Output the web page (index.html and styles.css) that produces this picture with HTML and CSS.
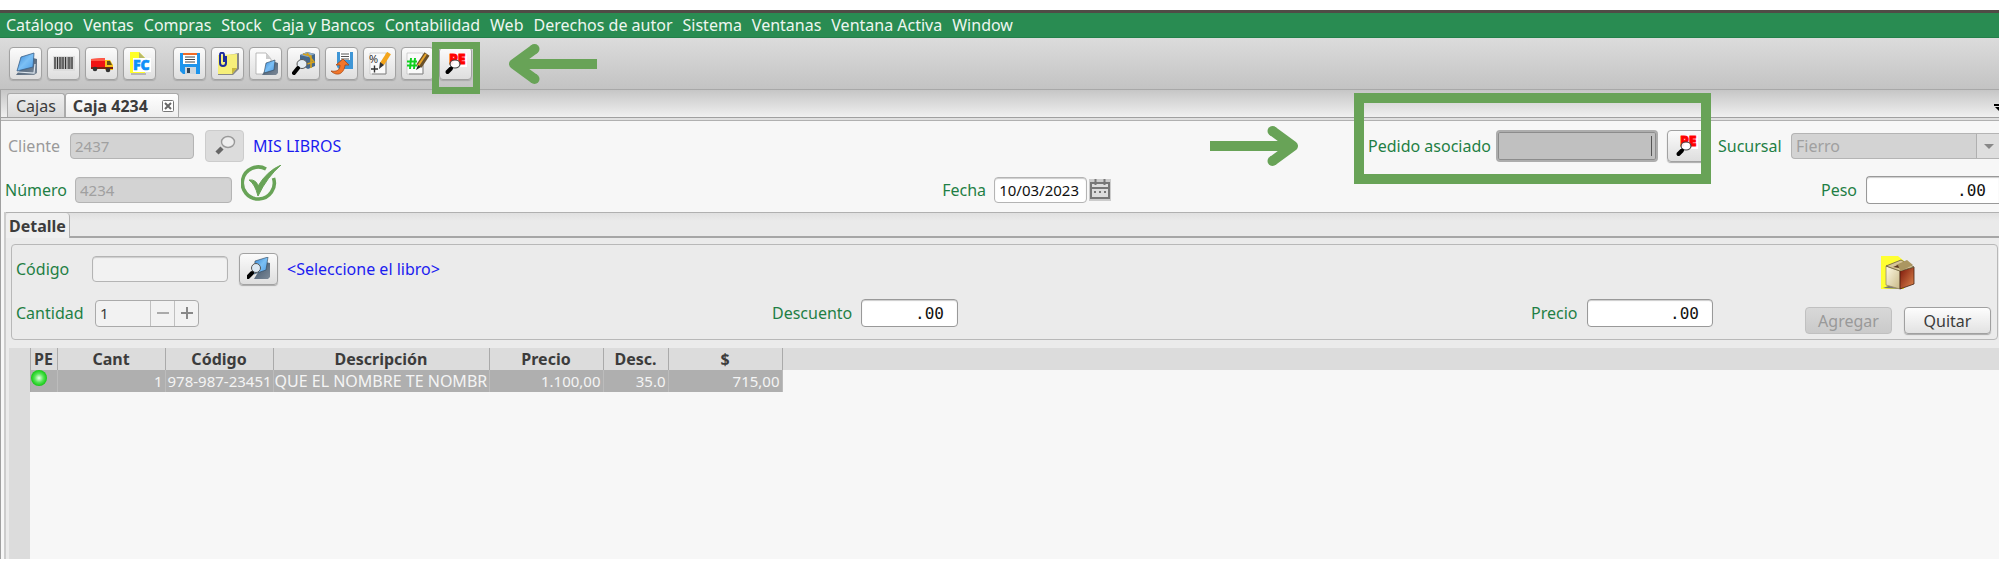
FILE: index.html
```html
<!DOCTYPE html>
<html lang="es">
<head>
<meta charset="utf-8">
<title>Caja 4234</title>
<link rel="stylesheet" href="styles.css">
</head>
<body>
<svg class="defs" aria-hidden="true">
  <defs>
    <linearGradient id="blue" x1="0" y1="0" x2="1" y2="1"><stop offset="0" stop-color="#2f7fd0"/><stop offset=".5" stop-color="#7cc0f5"/><stop offset="1" stop-color="#4b9be6"/></linearGradient>
    <linearGradient id="slate" x1="0" y1="0" x2="1" y2="1"><stop offset="0" stop-color="#3a5068"/><stop offset="1" stop-color="#7d8a98"/></linearGradient>
    <linearGradient id="cream" x1="0" y1="0" x2="1" y2="1"><stop offset="0" stop-color="#fffbe6"/><stop offset="1" stop-color="#c9b987"/></linearGradient>
    <linearGradient id="rust" x1="0" y1="0" x2="1" y2="1"><stop offset="0" stop-color="#7a1408"/><stop offset="1" stop-color="#e08a50"/></linearGradient>
    <radialGradient id="led"><stop offset="0" stop-color="#eaffea"/><stop offset=".55" stop-color="#55e455"/><stop offset="1" stop-color="#12c812"/></radialGradient>
    <symbol id="pe" viewBox="0 0 24 24">
      <path fill="#fff" d="M5 1h18v14H5z"/>
      <text x="5" y="12" font-family="Open Sans, sans-serif" font-weight="800" font-size="14" fill="#f00" stroke="#f00" stroke-width=".8">PE</text>
      <ellipse cx="11" cy="12" rx="5" ry="4" fill="#fff" fill-opacity=".9" stroke="#444" stroke-width="1.2"/>
      <path d="M7 16.500 3.500 20" stroke="#000" stroke-width="4" stroke-linecap="round"/>
    </symbol>
    <symbol id="arrow" viewBox="0 0 88 40">
      <path d="M0 20H80M62.500 5 83 20 62.500 35" fill="none" stroke="#68a357" stroke-width="10" stroke-linecap="butt" stroke-linejoin="round"/>
      <circle cx="62.500" cy="5" r="5" fill="#68a357"/><circle cx="62.500" cy="35" r="5" fill="#68a357"/>
    </symbol>
  </defs>
</svg>
<div class="app">
  <nav class="menubar">
    <button>Catálogo</button><button>Ventas</button><button>Compras</button><button>Stock</button><button>Caja y Bancos</button><button>Contabilidad</button><button>Web</button><button>Derechos de autor</button><button>Sistema</button><button>Ventanas</button><button>Ventana Activa</button><button>Window</button>
  </nav>

  <div class="toolbar">
    <button class="tool" aria-label="Libros"><svg viewBox="0 0 24 24"><path d="M19 6l4 1v14l-3 2H2l3-4z" fill="url(#slate)"/><path d="M4 20l16 1 1-9" fill="none" stroke="#dde6ee" stroke-width="1.200"/><path d="M7 5 20 1l-1 14-16 4z" fill="url(#blue)" stroke="#3a5f88" stroke-width=".8"/></svg></button>
    <button class="tool" aria-label="Código de barras"><svg viewBox="0 0 24 24"><path fill="#ddd" d="M1 4h22v15H1z"/><path d="M3 5v12M5.500 5v12M8 5v12M11 5v12M13.500 5v12M17 5v12M20 5v12" stroke="#333" stroke-width="1.400"/><path d="M9.500 5v12M15.300 5v12M18.500 5v12" stroke="#777" stroke-width=".8"/></svg></button>
    <button class="tool" aria-label="Envíos"><svg viewBox="0 0 24 24"><path d="M1 7l14-1v10H1z" fill="#f01414"/><path d="M1 7l14-1v3H1z" fill="#ff5a48"/><path d="M15 8h5l3 5v5h-8z" fill="#f6c21c"/><path d="M17 9h3l2 4h-5z" fill="#60501c"/><path d="M1 15h22v2H1z" fill="#7a2210"/><circle cx="5" cy="17" r="2.300" fill="#333"/><circle cx="18" cy="18" r="2.300" fill="#333"/></svg></button>
    <button class="tool" aria-label="Factura"><svg viewBox="0 0 24 24"><path d="M2 0h9l6 6v15H2z" fill="#ffff28"/><path d="M11 0v6h6z" fill="#b9b96a"/><path d="M5 6h18v14H5z" fill="#fff"/><path d="M3 22h15" stroke="#888"/><text x="5" y="18" font-family="Open Sans, sans-serif" font-weight="800" font-size="14" fill="#1090f8" stroke="#1090f8" stroke-width=".6">FC</text></svg></button>
    <span class="toolbar-split"></span>
    <button class="tool" aria-label="Guardar"><svg viewBox="0 0 24 24"><path d="M2 1h20v21H5l-3-3z" fill="#1c94ec"/><path d="M5 1h14v11H5z" fill="#fff"/><path d="M5 1h14v2H5z" fill="#f26a24"/><path d="M7 5h10M7 7.500h10M7 10h10" stroke="#444"/><path d="M7 15h11v7H7z" fill="#ccd6de"/><path d="M9 16h3v5H9z" fill="#345"/></svg></button>
    <button class="tool" aria-label="Nota adjunta"><svg viewBox="0 0 24 24"><path d="M3 5 23 1v16l-6 6H2z" fill="#888"/><path d="M2 3 21 2v14l-5 6H2z" fill="#f6ef7a"/><path d="M16 22v-6h5z" fill="#c8b83c"/><path d="M10 4v7c0 4-6 4-6 0V3c0-3 4-3 4 0v7" fill="none" stroke="#1c2c9c" stroke-width="2"/></svg></button>
    <button class="tool" aria-label="Nuevo libro"><svg viewBox="0 0 24 24"><path d="M2 1h10l5 6v15H2z" fill="#fff" stroke="#aaa" stroke-width=".8"/><path d="M12 1v6h5z" fill="#ccc"/><path d="M21 10l3 1v10l-2 2H8l2-3z" fill="url(#slate)"/><path d="M12 11l9-3-1 10-10 3z" fill="url(#blue)" stroke="#345" stroke-width=".6"/></svg></button>
    <button class="tool" aria-label="Buscar caja"><svg viewBox="0 0 24 24"><path d="M8 3l7-3 8 2v12l-7 3-8-4z" fill="#45688c"/><path d="M8 3l7-3 8 2-7 3z" fill="#8daac4"/><path d="M11 2l8 2v12M15 1l7 9-7 2" fill="none" stroke="#d5a21c" stroke-width="1.600"/><ellipse cx="10" cy="12" rx="5" ry="4.500" fill="#e6eef4" stroke="#555"/><path d="M6 16l-4 5" stroke="#000" stroke-width="4" stroke-linecap="round"/></svg></button>
    <button class="tool" aria-label="Recuperar"><svg viewBox="0 0 24 24"><path d="M7 0h16v17H9l-2-2z" fill="#3f96d6"/><path d="M10 0h10v8H10z" fill="#fff"/><path d="M11 2h8M11 4.500h8M11 7h8" stroke="#555"/><path d="M1 19c6 1 9-1 9-6H6l7-6 6 6h-4c-1 9-8 12-14 6z" fill="#f2762a" stroke="#a84812" stroke-width=".8"/></svg></button>
    <button class="tool" aria-label="Calcular"><svg viewBox="0 0 24 24"><path d="M2 1h16v21H2z" fill="#fafafa" stroke="#bbb" stroke-width=".6"/><path d="M4 22h14V8" fill="none" stroke="#888"/><text x="1" y="11" font-family="Open Sans, sans-serif" font-size="11" fill="#222">%</text><path d="M3 17h7M6.500 13.500v7" stroke="#333" stroke-width="1.400"/><path d="M21 1 14 12" stroke="#f3a51c" stroke-width="4.500"/><path d="m12 10 4 3-5 4z" fill="#333"/></svg></button>
    <button class="tool" aria-label="Numerar"><svg viewBox="0 0 24 24"><path d="M1 1h16v21H1z" fill="#fafafa" stroke="#bbb" stroke-width=".6"/><path d="M3 22h14V8" fill="none" stroke="#888"/><path d="M5 6 4 17M9 6 8 17M1 9.500h10M1 13.500h10" stroke="#10d020" stroke-width="2"/><path d="M21 2 13 14" stroke="#6a5028" stroke-width="6"/><path d="M20 2 12 14" stroke="#e8a428" stroke-width="2"/><path d="m10 18 2-5 3 2z" fill="#222"/></svg></button>
    <span class="marked"><button class="tool" aria-label="Pedido"><svg><use href="#pe"/></svg></button></span>
    <svg class="arrow arrow-left"><use href="#arrow"/></svg>
  </div>

  <main class="document">
  <div class="tabs">
    <button class="tab">Cajas</button>
    <button class="tab tab-on">Caja 4234 <svg class="close" viewBox="0 0 12 12"><rect x=".5" y=".5" width="11" height="11" rx="1" fill="#fff" stroke="#777"/><path d="m3 3 6 6M9 3 3 9" stroke="#666" stroke-width="2"/></svg></button>
    <svg class="more" viewBox="0 0 12 8"><path d="M0 0h12v2H0zM1 3h10L6 8z"/></svg>
  </div>

  <form class="header-form">
    <div class="row row-top">
      <label class="dim" for="cliente">Cliente</label>
      <input id="cliente" class="field w-client" value="2437" disabled>
      <button type="button" class="pick pick-off" aria-label="Buscar cliente" disabled><svg viewBox="0 0 24 24"><ellipse cx="15" cy="8" rx="6.500" ry="5.500" fill="#eee" stroke="#999" stroke-width="1.400"/><path d="m9 14-5 5" stroke="#666" stroke-width="4.500"/></svg></button>
      <output class="info">MIS LIBROS</output>
      <svg class="arrow arrow-right"><use href="#arrow"/></svg>
      <div class="order">
        <label for="pedido">Pedido asociado</label>
        <input id="pedido" class="field w-order">
        <button type="button" class="pick" aria-label="Buscar pedido"><svg><use href="#pe"/></svg></button>
      </div>
      <label for="sucursal">Sucursal</label>
      <div class="select-wrap">
        <select id="sucursal" disabled><option>Fierro</option></select>
      </div>
    </div>
    <div class="row row-bottom">
      <div class="cell">
        <label for="numero">Número</label>
        <input id="numero" class="field w-number" value="4234" disabled>
        <svg class="check" viewBox="0 0 40 38"><path d="M25 4A16 16 0 1 0 32.500 13" fill="none" stroke="#68a357" stroke-width="3.600"/><path d="M8 15q7-1 9 6Q26 6 40 0 26 12 17 31 14 19 8 15z" fill="#68a357" stroke="#68a357"/></svg>
      </div>
      <div class="cell">
        <label for="fecha">Fecha</label>
        <input id="fecha" class="field w-date" value="10/03/2023">
        <button type="button" class="calendar" aria-label="Calendario"><svg viewBox="0 0 22 22"><path d="M0 0h22v22H0z" fill="#ccc"/><path d="M2 4h18v15H2zM2 9h18" fill="#ddd" stroke="#777" stroke-width="2"/><path d="M6.500 0v6M15.500 0v6" stroke="#777" stroke-width="2"/><path d="M5 13h2m3 0h2m3 0h2" stroke="#777" stroke-width="2"/></svg></button>
      </div>
      <div class="cell">
        <label for="peso">Peso</label>
        <input id="peso" class="field num w-weight" value=".00">
      </div>
    </div>
  </form>

  <section class="detail">
    <div class="detail-tabs"><button class="detail-tab">Detalle</button></div>
    <form class="group">
      <div class="item">
        <div class="item-row">
          <label class="code-label" for="codigo">Código</label>
          <input id="codigo" class="field w-code">
          <button type="button" class="pick" aria-label="Buscar libro"><svg viewBox="0 0 24 24"><path d="M18 5l5 1v14l-2 2H7l3-5z" fill="url(#slate)"/><path d="M8 4 21 0l-2 13-12 4z" fill="url(#blue)" stroke="#345" stroke-width=".6"/><circle cx="9" cy="11" r="4.500" fill="#dce8f2" stroke="#555"/><path d="m5 16-4 4" stroke="#000" stroke-width="4" stroke-linecap="round"/></svg></button>
          <output class="info">&lt;Seleccione el libro&gt;</output>
        </div>
        <div class="item-row item-numbers">
          <div class="cell">
            <label for="cantidad">Cantidad</label>
            <div class="spin"><input id="cantidad" value="1"><button type="button" aria-label="Menos"><svg viewBox="0 0 12 12"><path d="M0 6h12" stroke="#aaa" stroke-width="2"/></svg></button><button type="button" aria-label="Más"><svg viewBox="0 0 12 12"><path d="M0 6h12M6 0v12" stroke="#888" stroke-width="2"/></svg></button></div>
          </div>
          <div class="cell">
            <label for="descuento">Descuento</label>
            <input id="descuento" class="field num w-discount" value=".00">
          </div>
          <div class="cell">
            <label for="precio">Precio</label>
            <input id="precio" class="field num w-price" value=".00">
          </div>
        </div>
      </div>
      <div class="actions">
        <svg class="box" viewBox="0 0 34 34"><path d="M0 0h17l6 5v28H0z" fill="#ffff32"/><path d="m2 32 8-3h10v4z" fill="#777"/><path d="m5 10 14 5v18L5 29z" fill="url(#cream)" stroke="#998c66" stroke-width=".8"/><path d="m19 15 14-4v17l-14 5z" fill="url(#rust)" stroke="#442010" stroke-width=".8"/><path d="m5 10 15-6 13 7-14 4z" fill="#d8c698" stroke="#6a5c3c" stroke-width=".8"/><path d="m15 9 11-5 6 5-12 6z" fill="#ab9661"/><path d="m12 11 5-2 1 3z" fill="#5a3820"/></svg>
        <div class="buttons">
          <button type="button" class="btn" disabled>Agregar</button>
          <button type="button" class="btn">Quitar</button>
        </div>
      </div>
    </form>
    <div class="grid">
      <table>
        <colgroup><col class="c-row"><col class="c-pe"><col class="c-wide"><col class="c-wide"><col class="c-desc"><col class="c-mid"><col class="c-pct"><col class="c-mid"></colgroup>
        <thead><tr><th></th><th>PE</th><th>Cant</th><th>Código</th><th>Descripción</th><th>Precio</th><th>Desc.</th><th>$</th></tr></thead>
        <tbody><tr><th></th><td class="led"><svg viewBox="0 0 16 16"><circle cx="8" cy="8" r="8" fill="url(#led)"/></svg></td><td class="r">1</td><td>978-987-23451</td><td class="title">QUE EL NOMBRE TE NOMBR</td><td class="r">1.100,00</td><td class="r">35.0</td><td class="r">715,00</td></tr></tbody>
      </table>
    </div>
  </section>
  </main>
</div>
</body>
</html>
```
FILE: styles.css
```css
* { box-sizing: border-box; }

body {
  margin: 0;
  background: #fff;
  color: #3c3c3c;
  font: 16px/20px "Noto Sans", "Open Sans", sans-serif;
  overflow-x: hidden;
}

button, input, select { font: inherit; color: inherit; margin: 0; }
button { padding: 0; border: 0; background: none; }
svg { display: block; flex: none; }
.defs { position: absolute; width: 0; height: 0; }

.app {
  display: flex;
  flex-direction: column;
  min-height: 100vh;
  padding: 10px 0 13px;
}

/* Menu bar */
.menubar {
  display: flex;
  gap: 10px;
  height: 28px;
  padding: 0 6px;
  border-top: 3px solid #504c46;
  border-bottom: 1px solid #23804a;
  background: #298c52;
  color: #eef6f0;
}
.menubar button { white-space: nowrap; }

/* Toolbar */
.toolbar {
  display: flex;
  align-items: center;
  gap: 5px;
  height: 52px;
  padding: 0 9px;
  border-bottom: 1px solid #a8a8a8;
  background: linear-gradient(#dcdcdc, #c3c3c3);
}
.tool, .pick {
  display: flex;
  align-items: center;
  justify-content: center;
  border: 1px solid #a2a2a2;
  border-radius: 4px;
  background: linear-gradient(#fbfbfb, #dedede);
  box-shadow: 0 1px 1px #aaa;
}
.tool { width: 33px; height: 33px; flex: none; }
.tool svg, .pick svg { width: 24px; height: 24px; }
.toolbar-split { width: 7px; }
.marked { position: relative; }
.marked::after {
  content: "";
  position: absolute;
  inset: -5px -8px -14px -7px;
  border: 7px solid #68a357;
}
.arrow { width: 88px; height: 40px; }
.arrow-left { transform: rotate(180deg); margin-left: 32px; }

/* Window tabs */
.document {
  display: flex;
  flex: 1;
  flex-direction: column;
  border-left: 1px solid #a0a0a0;
  background: #f7f7f7;
}
.tabs {
  display: flex;
  align-items: flex-end;
  height: 31px;
  padding: 0 0 3px 6px;
  border-bottom: 1px solid #b0b0b0;
  background: linear-gradient(#c6c6c6, #f0f0f0 27px, #a0a0a0 27px, #a0a0a0 28px, #e0e0e0 28px);
}
.tab {
  display: flex;
  align-items: center;
  gap: 14px;
  height: 24px;
  padding: 0 8px;
  border: 1px solid #aaa;
  border-bottom: 0;
  border-radius: 3px 3px 0 0;
  background: linear-gradient(#eee, #dadada);
}
.tab-on {
  padding: 0 4px 0 7px;
  background: linear-gradient(#fff, #eee);
  font-weight: bold;
}
.close { width: 12px; height: 12px; }
.more { width: 12px; height: 8px; margin: 0 -7px 5px auto; }

/* Document header */
.header-form {
  display: flex;
  flex-direction: column;
  gap: 12px;
  padding: 9px 0 6px 4px;
}
.row, .cell, .order { display: flex; align-items: center; }
.row { height: 32px; }
label { color: #1f7f45; white-space: nowrap; }
.dim { color: #9a9a9a; }
.info { color: #1c1cf0; white-space: nowrap; }

.field {
  height: 26px;
  padding: 0 4px;
  border: 1px solid #b4b4b4;
  border-radius: 4px;
  background: #fff;
  color: #111;
  font-size: 15px;
  box-shadow: inset 0 1px 1px #ccc;
}
.field:disabled { background: #d3d3d3; color: #a0a0a0; }
.num {
  height: 28px;
  padding: 0 13px;
  border-color: #999;
  font-family: "DejaVu Sans Mono", monospace;
  font-size: 16px;
  text-align: right;
}

.row-top { padding-left: 3px; }
.row-top .dim { width: 62px; }
.w-client { width: 124px; margin-right: 11px; }
.pick { width: 39px; height: 32px; flex: none; }
.pick-off { background: #dcdcdc; border-color: #ccc; box-shadow: none; }
.row-top .info { margin-left: 9px; }
.arrow-right { margin-left: auto; }
.order {
  position: relative;
  margin: 0 12px 0 70px;
}
.order label { width: 128px; }
.order::after {
  content: "";
  position: absolute;
  inset: -37px -5px -22px -14px;
  border: 10px solid #68a357;
  pointer-events: none;
}
.w-order {
  width: 162px;
  height: 32px;
  margin-right: 9px;
  border: 2px solid #adadad;
  background: linear-gradient(#555, #555) 100% 50% / 1px 20px no-repeat content-box, #c0c0c0;
  box-shadow: inset 0 0 0 1px #8c8c8c;
}
.row-top > label[for="sucursal"] { width: 73px; }
.select-wrap { position: relative; width: 208px; }
.select-wrap select {
  display: block;
  width: 100%;
  height: 26px;
  padding: 0 4px;
  appearance: none;
  border: 1px solid #b4b4b4;
  border-right: 0;
  border-radius: 4px 0 0 4px;
  background: linear-gradient(90deg, #d3d3d3, #d3d3d3) 0 0 / calc(100% - 23px) 100% no-repeat, #dedede;
  color: #a0a0a0;
  opacity: 1;
}
.select-wrap::before {
  content: "";
  position: absolute;
  top: 1px;
  right: 22px;
  height: 24px;
  border-left: 1px solid #b0b0b0;
}
.select-wrap::after {
  content: "";
  position: absolute;
  top: 11px;
  right: 5px;
  border: 5px solid transparent;
  border-top-color: #888;
  border-bottom: 0;
}

.row-bottom { display: grid; grid-template-columns: 47% 1fr auto; }
.row-bottom label[for="numero"] { width: 70px; }
.w-number { width: 157px; margin-right: 9px; }
.check { width: 40px; height: 38px; margin-top: -12px; }
.row-bottom label[for="fecha"] { width: 52px; }
.w-date { width: 93px; }
.calendar { margin-left: 2px; }
.calendar svg { width: 22px; height: 22px; }
.row-bottom label[for="peso"] { width: 45px; }
.w-weight { width: 133px; border-right: 0; border-radius: 4px 0 0 4px; }

/* Detail */
.detail {
  display: flex;
  flex: 1;
  flex-direction: column;
  margin-left: 3px;
  border-left: 2px solid #ccc;
  background: #ebebeb;
}
.detail-tabs {
  height: 26px;
  border-top: 1px solid #b0b0b0;
  border-bottom: 2px solid #a6a6a6;
  background: linear-gradient(#e0e0e0, #eaeaea 8px);
}
.detail-tab {
  height: 25px;
  padding: 0 3px;
  border-right: 1px solid #b0b0b0;
  border-radius: 4px 4px 0 0;
  background: #efefef;
  font-weight: bold;
}
.group {
  display: flex;
  gap: 92px;
  height: 96px;
  margin: 6px 1px 8px 5px;
  padding: 8px 6px 5px 4px;
  border: 1px solid #b8b8b8;
  border-radius: 4px;
}
.item { display: flex; flex: 1; flex-direction: column; gap: 12px; }
.item-row { display: flex; align-items: center; height: 32px; }
.code-label { width: 76px; }
.w-code { width: 136px; margin-right: 11px; background: #f2f2f2; }
.item .info { margin-left: 9px; }
.item-numbers { display: grid; grid-template-columns: 756fr 759fr auto; }
.item-numbers label[for="cantidad"] { width: 79px; }
.item-numbers label[for="descuento"] { width: 89px; }
.item-numbers label[for="precio"] { width: 56px; }
.w-discount { width: 97px; }
.w-price { width: 126px; }
.spin {
  display: flex;
  width: 104px;
  height: 27px;
  border: 1px solid #aaa;
  border-radius: 4px;
  background: #f2f2f2;
}
.spin input { flex: 1; min-width: 0; padding: 0 4px; border: 0; background: none; font-size: 15px; }
.spin button {
  display: flex;
  align-items: center;
  justify-content: center;
  width: 24px;
  border-left: 1px solid #c0c0c0;
}
.spin svg { width: 12px; height: 12px; }

.actions {
  display: flex;
  flex-direction: column;
  align-items: center;
  justify-content: space-between;
  padding-top: 3px;
}
.box { width: 34px; height: 34px; }
.buttons { display: flex; gap: 12px; }
.btn {
  width: 87px;
  height: 27px;
  border: 1px solid #a0a0a0;
  border-radius: 4px;
  background: linear-gradient(#fdfdfd, #e2e2e2);
  box-shadow: 0 1px 1px #aaa;
}
.btn:disabled {
  border-color: #c0c0c0;
  background: linear-gradient(#d8d8d8, #cacaca);
  box-shadow: none;
  color: #999;
}

/* Items table */
.grid {
  flex: 1;
  margin-left: 3px;
  background:
    linear-gradient(#dcdcdc, #dcdcdc) 0 0 / 100% 22px no-repeat,
    linear-gradient(#dcdcdc, #dcdcdc) 0 0 / 21px 100% no-repeat,
    #f7f7f7;
}
table { width: 773px; table-layout: fixed; border-collapse: collapse; }
.c-row { width: 21px; }
.c-pe { width: 27px; }
.c-wide { width: 108px; }
.c-desc { width: 216px; }
.c-mid { width: 114px; }
.c-pct { width: 65px; }
th, td {
  height: 22px;
  padding: 0 2px;
  overflow: hidden;
  white-space: nowrap;
  line-height: 20px;
  text-align: left;
}
th { padding: 0; border-right: 1px solid #aaa; background: #dcdcdc; text-align: center; }
td { border-right: 1px solid #bcbcbc; background: #afafaf; color: #f4f4f4; font-size: 15px; }
.title { padding: 0 1px; font-size: 16px; }
.r { text-align: right; }
.led { padding: 0; vertical-align: top; }
.led svg { width: 16px; height: 16px; }
```
